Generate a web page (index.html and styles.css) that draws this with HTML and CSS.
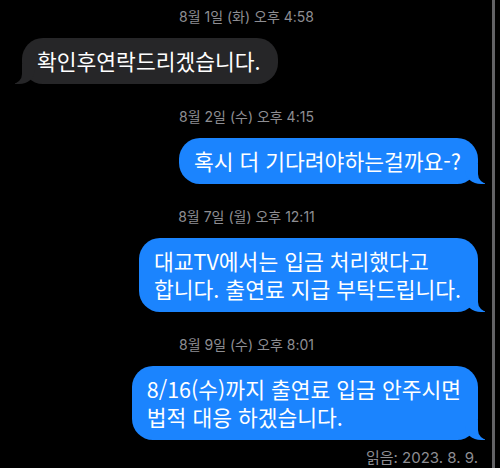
FILE: index.html
```html
<!DOCTYPE html>
<html lang="ko">
<head>
<meta charset="utf-8">
<link rel="stylesheet" href="styles.css">
</head>
<body>
<div class="screen">
  <div class="thread">
    <div class="stamp">8월 1일 (화) 오후 4:58</div>
    <div class="row row-in"><div class="bubble in">확인후연락드리겠습니다.</div></div>

    <div class="stamp">8월 2일 (수) 오후 4:15</div>
    <div class="row row-out"><div class="bubble out">혹시 더 기다려야하는걸까요-?</div></div>

    <div class="stamp">8월 7일 (월) 오후 12:11</div>
    <div class="row row-out"><div class="bubble out">대교TV에서는 입금 처리했다고<br>합니다. 출연료 지급 부탁드립니다.</div></div>

    <div class="stamp">8월 9일 (수) 오후 8:01</div>
    <div class="row row-out row-last"><div class="bubble out">8/16(수)까지 출연료 입금 안주시면<br>법적 대응 하겠습니다.</div></div>
    <div class="receipt">읽음: 2023. 8. 9.</div>
  </div>
  <div class="scrollbar"></div>
</div>
</body>
</html>
```
FILE: styles.css
```css
html, body {
  margin: 0;
  padding: 0;
  background: #000;
}
body {
  width: 500px;
  height: 468px;
  overflow: hidden;
  font-family: Inter, "Noto Sans CJK KR", sans-serif;
}
.screen {
  display: flex;
  height: 468px;
}
.thread {
  width: 492px;
  display: flex;
  flex-direction: column;
  padding-top: 8px;
  box-sizing: border-box;
  overflow: hidden;
}
.scrollbar {
  width: 3px;
  background: #636366;
}
.stamp {
  text-align: center;
  color: #8e8e93;
  font-size: 14px;
  line-height: 18px;
  height: 18px;
  margin-bottom: 12px;
  padding-left: 1px;
}
.row {
  display: flex;
  margin-bottom: 24px;
}
.row-in { justify-content: flex-start; padding-left: 22px; }
.row-out { justify-content: flex-end; padding-right: 14px; }
.row-last { margin-bottom: 0; }
.bubble {
  position: relative;
  font-family: "Noto Sans CJK KR", sans-serif;
  font-size: 21.5px;
  line-height: 28px;
  color: #fff;
  padding: 9px 17px 9px 15px;
  border-radius: 21px;
  white-space: nowrap;
}
.in { background: #262628; }
.out { background: #1b84fe; }
.in::before, .in::after, .out::before, .out::after {
  content: "";
  position: absolute;
  bottom: 0;
  height: 20px;
}
.in::before {
  left: -7px;
  width: 20px;
  background: #262628;
  border-bottom-right-radius: 16px 14px;
}
.in::after {
  left: -26px;
  width: 26px;
  background: #000;
  border-bottom-right-radius: 10px;
}
.out::before {
  right: -7px;
  width: 20px;
  background: #1b84fe;
  border-bottom-left-radius: 16px 14px;
}
.out::after {
  right: -26px;
  width: 26px;
  background: #000;
  border-bottom-left-radius: 10px;
}
.receipt {
  margin-top: 9px;
  text-align: right;
  padding-right: 14px;
  color: #8e8e93;
  font-size: 15px;
  line-height: 18px;
}
```
